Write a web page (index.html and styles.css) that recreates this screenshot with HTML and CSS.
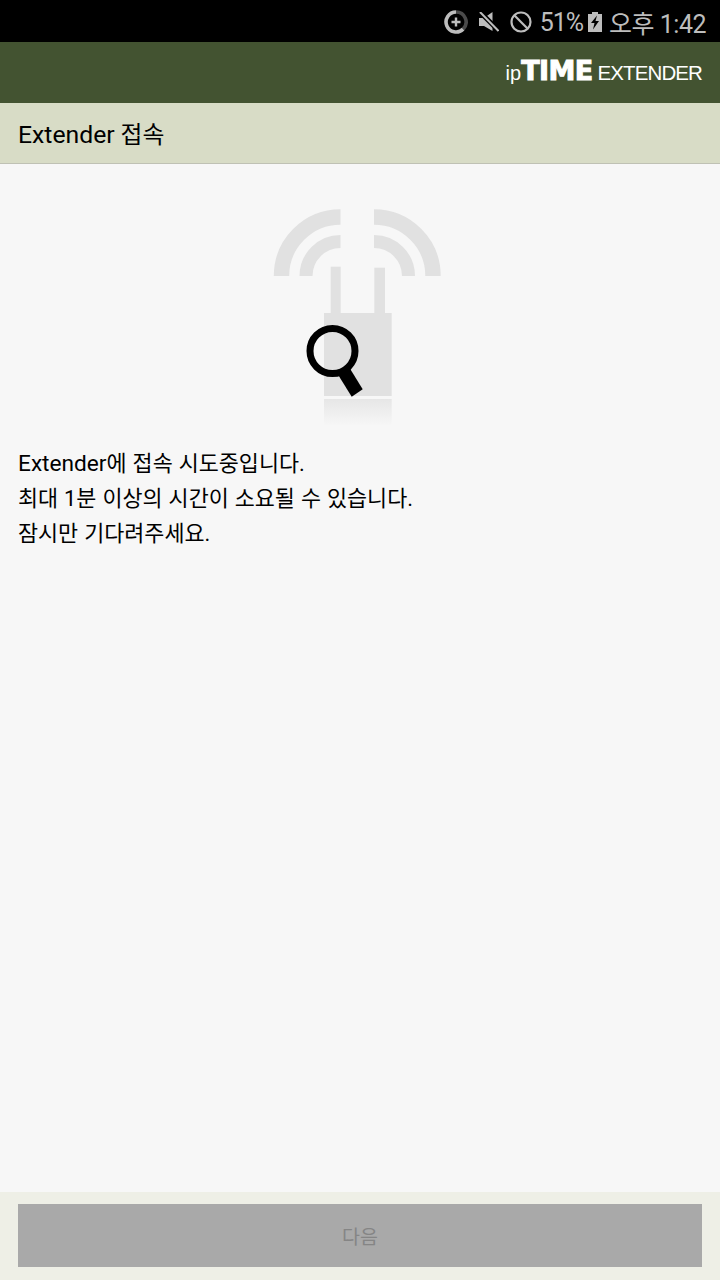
FILE: index.html
```html
<!DOCTYPE html>
<html lang="ko">
<head>
    <meta charset="UTF-8">
    <meta name="viewport" content="width=device-width, initial-scale=1.0">
    <title>Extender 접속</title>
    <link rel="stylesheet" href="styles.css">
</head>
<body>
    <div class="status-bar">
        <!-- data saver -->
        <svg class="icon-saver" width="24" height="24" viewBox="0 0 24 24">
            <path d="M12 2 A10 10 0 0 1 19.1 19.1" fill="none" stroke="#4a4a4a" stroke-width="3.6"/>
            <path d="M19.1 19.1 A10 10 0 1 1 12 2" fill="none" stroke="#bdbdbd" stroke-width="3.6"/>
            <path d="M12 7.500 V16.500 M7.500 12 H16.500" stroke="#bdbdbd" stroke-width="2.400"/>
        </svg>
        <!-- muted speaker -->
        <svg class="icon-mute" width="20" height="20" viewBox="0 0 20 20">
            <path d="M0 6 H5 L13.500 0 V19 L5 14 H0 Z" fill="#bdbdbd"/>
            <path d="M0 -1 L19 18" stroke="#000" stroke-width="5"/>
            <path d="M1 0 L19.500 19" stroke="#bdbdbd" stroke-width="2"/>
        </svg>
        <!-- do not disturb -->
        <svg class="icon-dnd" width="22" height="22" viewBox="0 0 22 22">
            <circle cx="11" cy="11" r="9.500" fill="none" stroke="#bdbdbd" stroke-width="2.200"/>
            <path d="M4.300 4.300 L17.700 17.700" stroke="#bdbdbd" stroke-width="2.200"/>
        </svg>
        <span class="battery-text">51%</span>
        <!-- charging battery -->
        <svg class="icon-battery" width="14" height="20" viewBox="0 0 14 20">
            <path d="M4 0 H10 V2 H14 V20 H0 V2 H4 Z" fill="#bdbdbd"/>
            <path d="M9 3.500 L3 11 H6.500 L5 17.500 L11 9 H7.500 Z" fill="#000"/>
        </svg>
        <span class="clock">오후 1:42</span>
    </div>

    <header class="app-bar">
        <div class="logo">
            <span class="logo-ip">ip</span><span class="logo-time">TIME</span><span class="logo-name">EXTENDER</span>
        </div>
    </header>

    <div class="title-bar"><span><span class="latin">Extender</span> 접속</span></div>

    <main class="content">
        <svg class="illustration" width="210" height="235" viewBox="0 0 210 235">
            <defs>
                <linearGradient id="shine" x1="0" y1="0" x2="0" y2="1">
                    <stop offset="0" stop-color="#e6e6e6"/>
                    <stop offset="1" stop-color="#f7f7f7"/>
                </linearGradient>
            </defs>
            <!-- signal arcs -->
            <g fill="none" stroke="#e1e1e1">
                <path d="M31.500 81 A59 59 0 0 1 90.500 22" stroke-width="15.400"/>
                <path d="M56 81 A34.500 34.500 0 0 1 90.500 46.500" stroke-width="13"/>
                <path d="M124 22 A59 59 0 0 1 183 81" stroke-width="15.400"/>
                <path d="M124 46.500 A34.500 34.500 0 0 1 158.500 81" stroke-width="13"/>
            </g>
            <!-- extender body -->
            <rect x="80.700" y="71.700" width="10" height="47" fill="#e1e1e1"/>
            <rect x="124.300" y="72.700" width="10.700" height="46" fill="#e1e1e1"/>
            <rect x="74" y="118" width="67.700" height="83" fill="#e1e1e1"/>
            <rect x="74" y="204" width="67.700" height="27" fill="url(#shine)"/>
            <!-- magnifier -->
            <circle cx="82.500" cy="156" r="22.500" fill="none" stroke="#000" stroke-width="7"/>
            <path d="M87 178 L99 172 L112.700 194.300 L101.700 201.700 Z" fill="#000"/>
        </svg>
        <p class="message"><span class="latin">Extender</span>에 접속 시도중입니다.<br>최대 1분 이상의 시간이 소요될 수 있습니다.<br>잠시만 기다려주세요.</p>
    </main>

    <footer class="footer">
        <button class="next-button" disabled>다음</button>
    </footer>
</body>
</html>
```

FILE: styles.css
```css
* {
    margin: 0;
    padding: 0;
    box-sizing: border-box;
}

body {
    width: 720px;
    height: 1280px;
    display: flex;
    flex-direction: column;
    overflow: hidden;
    background-color: #f7f7f7;
    color: #000;
    font-family: Roboto, "Noto Sans CJK KR", sans-serif;
}

.latin {
    font-size: 1.04em;
}

.status-bar {
    height: 42px;
    flex: none;
    display: flex;
    align-items: center;
    justify-content: flex-end;
    padding: 1px 14px 0 0;
    background-color: #000;
    color: #bdbdbd;
    font-size: 25px;
}

.icon-saver {
    margin-right: 11px;
}

.icon-mute {
    margin-right: 11px;
}

.icon-dnd {
    margin-right: 8px;
}

.battery-text {
    padding-top: 1px;
    letter-spacing: -1px;
}

.icon-battery {
    margin: 0 7px 0 5px;
}

.clock {
    letter-spacing: -0.5px;
}

.app-bar {
    height: 61px;
    flex: none;
    display: flex;
    align-items: center;
    justify-content: flex-end;
    padding: 0 18px 3px 0;
    background-color: #435331;
    color: #fff;
}

.logo {
    display: flex;
    align-items: baseline;
    font-family: "Liberation Sans", Arial, sans-serif;
}

.logo-ip {
    font-size: 20px;
}

.logo-time {
    font-family: "DejaVu Sans", sans-serif;
    font-size: 27px;
    font-weight: bold;
    line-height: 1;
    -webkit-text-stroke: 1px #fff;
    letter-spacing: -0.6px;
    margin-right: 5px;
}

.logo-name {
    font-size: 20.500px;
    letter-spacing: -0.9px;
}

.title-bar {
    height: 61px;
    flex: none;
    display: flex;
    align-items: center;
    padding: 0 0 2px 18px;
    background-color: #d8dcc6;
    border-bottom: 1px solid #bfc1b4;
    font-size: 23.800px;
}

.content {
    flex: 1;
    padding: 31px 18px 0;
}

.illustration {
    display: block;
    margin: 0 0 16px 232px;
}

.message {
    font-size: 21.800px;
    line-height: 35px;
    word-spacing: 0.6px;
}

.footer {
    height: 88px;
    flex: none;
    padding: 12px 18px 13px;
    background-color: #eeefe6;
}

.next-button {
    width: 100%;
    height: 63px;
    border: none;
    background-color: #a9a9a9;
    color: #858585;
    font-family: inherit;
    font-size: 19.500px;
}
```
